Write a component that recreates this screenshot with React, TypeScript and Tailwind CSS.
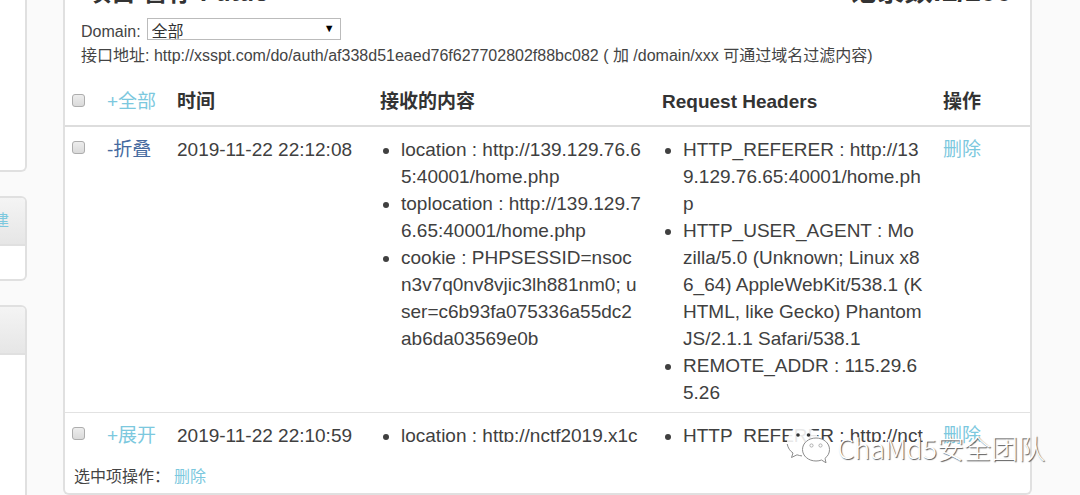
import React from "react";

type Row = {
  id: string;
  toggle: string;
  open: boolean;
  time: string;
  content: string[];
  headers: string[];
};

const rows: Row[] = [
  {
    id: "r1",
    toggle: "-折叠",
    open: true,
    time: "2019-11-22 22:12:08",
    content: [
      "location : http://139.129.76.65:40001/home.php",
      "toplocation : http://139.129.76.65:40001/home.php",
      "cookie : PHPSESSID=nsocn3v7q0nv8vjic3lh881nm0; user=c6b93fa075336a55dc2ab6da03569e0b",
    ],
    headers: [
      "HTTP_REFERER : http://139.129.76.65:40001/home.php",
      "HTTP_USER_AGENT : Mozilla/5.0 (Unknown; Linux x86_64) AppleWebKit/538.1 (KHTML, like Gecko) PhantomJS/2.1.1 Safari/538.1",
      "REMOTE_ADDR : 115.29.65.26",
    ],
  },
  {
    id: "r2",
    toggle: "+展开",
    open: false,
    time: "2019-11-22 22:10:59",
    content: ["location : http://nctf2019.x1c"],
    headers: ["HTTP_REFERER : http://nct"],
  },
];

function Tick({ label }: { label: string }) {
  return (
    <input
      type="checkbox"
      aria-label={label}
      className="block size-[13px] appearance-none rounded-[3px] border border-[#adadad] bg-linear-to-b from-[#ededed] to-[#dadada]"
    />
  );
}

function Items({ items, open }: { items: string[]; open: boolean }) {
  return (
    <ul
      className={
        open
          ? "w-[261px] list-disc pl-[21px] break-all"
          : "h-5 w-[261px] list-disc overflow-hidden pl-[21px] break-all"
      }
    >
      {items.map((item) => (
        <li key={item}>{item}</li>
      ))}
    </ul>
  );
}

function SideCard({ action, className }: { action?: string; className: string }) {
  return (
    <section className={`overflow-hidden rounded-r-md border-2 border-l-0 border-[#e0e0e0] bg-white ${className}`}>
      <div className="flex h-12 items-center justify-end border-b-2 border-[#e0e0e0] bg-linear-to-b from-[#f4f4f4] to-[#e6e6e6] pr-4">
        {action && (
          <a href="#create" className="whitespace-nowrap text-base text-[#7cc8de]">
            {action}
          </a>
        )}
      </div>
    </section>
  );
}

function Watermark() {
  return (
    <div className="pointer-events-none absolute right-[35px] bottom-7 flex items-center gap-[6px]">
      <svg viewBox="0 0 46 38" className="h-[38px] w-[46px]" aria-hidden="true">
        <path
          d="M18 -2C9 -2 2 5 2 13.500C2 18 4.500 21.500 8 24L6.500 28.500L12 25.800C14 26.500 16 27 18 27C27 27 34 21 34 13.500C34 5 27 -2 18 -2Z"
          fill="#fff"
          fillOpacity="0.88"
        />
        <path d="M2.200 15C3 19 5 22 8 24L6.500 28.500L12 25.800C14 26.500 15.500 26.800 17 26.900" fill="none" stroke="#8c8c8c" />
        <circle cx="13" cy="6" r="1.800" fill="#333" />
        <circle cx="23.500" cy="6" r="1.800" fill="#333" />
        <path
          d="M31 9C23.500 9 17.500 14 17.500 20.500C17.500 27 23.500 32 31 32C33 32 35 31.700 36.500 31L41 33.800L40 29.300C43 27 44.500 24 44.500 20.500C44.500 14 38.500 9 31 9Z"
          fill="#fff"
          stroke="#8c8c8c"
        />
        <circle cx="26.500" cy="16.500" r="1.600" fill="#fff" stroke="#a0a0a0" strokeWidth="0.800" />
        <circle cx="35.500" cy="16.500" r="1.600" fill="#fff" stroke="#a0a0a0" strokeWidth="0.800" />
      </svg>
      <span className="font-['Noto_Sans_CJK_SC',sans-serif] text-[27px] leading-9 font-light whitespace-nowrap text-white [text-shadow:1px_1px_1px_#555]">
        ChaMd5安全团队
      </span>
    </div>
  );
}

export default function App() {
  return (
    <div className="relative flex h-screen items-start overflow-hidden bg-[#fafafa] font-['Liberation_Sans','Noto_Sans_CJK_SC',sans-serif] text-[#444]">
      <aside className="flex w-[27px] shrink-0 flex-col gap-6">
        <section className="h-[172px] rounded-br-md border-r-2 border-b-2 border-[#e0e0e0] bg-white" />
        <SideCard action="创建" className="h-[85px]" />
        <SideCard className="h-60" />
      </aside>

      <main className="-mt-6 mr-12 ml-9 min-w-0 flex-1 rounded-md border-2 border-t-0 border-[#e0e0e0] bg-white">
        <header className="flex h-8 items-center justify-between pr-[18px] pl-[21px] font-bold text-[#333]">
          <h1 className="text-[25px] leading-8">项目 暂存 Futuo</h1>
          <span className="text-[28px] leading-7">记录数:2/200</span>
        </header>

        <div className="px-4 pt-[10px] text-base leading-6">
          <div className="flex items-start gap-[6px]">
            <label htmlFor="domain" className="pt-[2px]">Domain:</label>
            <div className="relative">
              <select
                id="domain"
                className="block h-[22px] w-[194px] appearance-none border border-[#bbb] bg-white pt-[3px] pl-1 text-base leading-5 text-[#333]"
              >
                <option>全部</option>
              </select>
              <span className="pointer-events-none absolute top-0 right-[6px] text-[11px] leading-5 text-black">▼</span>
            </div>
          </div>
          <p>接口地址: http://xsspt.com/do/auth/af338d51eaed76f627702802f88bc082 ( 加 /domain/xxx 可通过域名过滤内容)</p>
        </div>

        <table className="mt-[10px] w-full table-fixed border-collapse text-left text-[19px] leading-[27px] text-[#404040]">
          <colgroup>
            <col className="w-[34px]" />
            <col className="w-[70px]" />
            <col className="w-[203px]" />
            <col className="w-[282px]" />
            <col className="w-[281px]" />
            <col />
          </colgroup>
          <thead>
            <tr className="border-b-2 border-[#ddd] text-[#333]">
              <th className="pt-4 pl-[7px] align-top">
                <Tick label="全选" />
              </th>
              <th className="py-[10px] pl-2 font-normal">
                <a href="#all" className="text-[#7cc8de]">+全部</a>
              </th>
              <th className="py-[10px] pl-2">时间</th>
              <th className="py-[10px] pl-2">接收的内容</th>
              <th className="py-[10px] pl-2">Request Headers</th>
              <th className="py-[10px] pl-2">操作</th>
            </tr>
          </thead>
          <tbody>
            {rows.map((row) => (
              <tr key={row.id} className="border-b border-[#e2e2e2] align-top last:border-b-0">
                <td className="pt-[14px] pl-[7px]">
                  <Tick label={row.time} />
                </td>
                <td className="pt-[9px] pl-2">
                  <a href={`#${row.id}`} className={row.open ? "text-[#466a9f]" : "text-[#7cc8de]"}>
                    {row.toggle}
                  </a>
                </td>
                <td className="pt-[9px] pl-2 whitespace-nowrap">{row.time}</td>
                <td className="pt-[9px] pb-[6px] pl-2">
                  <Items items={row.content} open={row.open} />
                </td>
                <td className="pt-[9px] pb-[6px] pl-2">
                  <Items items={row.headers} open={row.open} />
                </td>
                <td className="pt-[9px] pl-2">
                  <a href={`#delete-${row.id}`} className="text-[#7cc8de]">删除</a>
                </td>
              </tr>
            ))}
          </tbody>
        </table>

        <footer className="flex gap-1 px-[9px] pt-4 pb-1 text-base leading-6">
          <span>选中项操作：</span>
          <a href="#delete-selected" className="text-[#7cc8de]">删除</a>
        </footer>
      </main>

      <Watermark />
    </div>
  );
}
